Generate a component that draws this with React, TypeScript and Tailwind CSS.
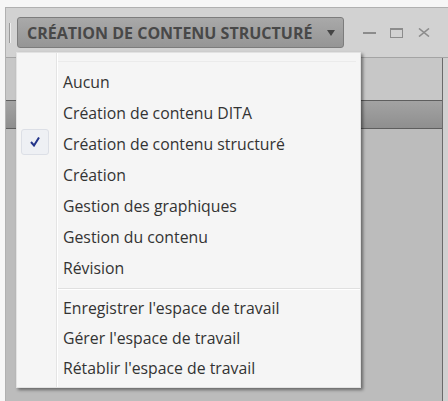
import React from "react";

const items1 = [
  "Aucun",
  "Création de contenu DITA",
  "Création de contenu structuré",
  "Création",
  "Gestion des graphiques",
  "Gestion du contenu",
  "Révision",
];
const items2 = [
  "Enregistrer l'espace de travail",
  "Gérer l'espace de travail",
  "Rétablir l'espace de travail",
];

export default function App() {
  return (
    <div
      className="relative w-[448px] h-[401px] overflow-hidden bg-[#f6f6f6]"
      style={{ fontFamily: '"Open Sans", "Noto Sans", sans-serif' }}
    >
      <div className="absolute left-[5px] top-[7px] right-0 bottom-0 flex flex-col border-l border-t border-[#b0b0b0] bg-[#d2d2d2]">
        {/* title bar */}
        <div className="relative h-[50px] flex items-center border-b border-[#a4a4a4] shrink-0">
          <div className="ml-[3px] w-[1px] h-[20px] bg-[#9a9a9a] border-r border-[#eeeeee] box-content" />
          <div className="ml-[6px] w-[327px] h-[31px] rounded-[3px] border border-[#7c7c7c] bg-gradient-to-b from-[#a9a9a9] to-[#959595] flex items-center pl-[9px] pr-[8px]">
            <span className="text-[16px] font-bold text-[#484848] whitespace-nowrap leading-none">
              CRÉATION DE CONTENU STRUCTURÉ
            </span>
            <svg className="ml-auto" width="8" height="6" viewBox="0 0 8 6">
              <path d="M0 0 L8 0 L4 6 Z" fill="#454545" />
            </svg>
          </div>
          {/* window controls */}
          <div className="ml-[19px] flex items-center">
            <div className="w-[13px] h-[2px] bg-[#8c8c8c]" />
            <div className="ml-[14px] w-[13px] h-[10px] border border-t-2 border-[#8c8c8c]" />
            <svg className="ml-[15px]" width="12" height="9" viewBox="0 0 12 9">
              <path d="M1 0.5 L11 8.5 M11 0.5 L1 8.5" stroke="#8c8c8c" strokeWidth="1.6" />
            </svg>
          </div>
        </div>
        {/* panel */}
        <div className="flex-1 flex">
          <div className="flex-1 flex flex-col border-r border-[#6a6a6a]">
            <div className="h-[42px] bg-[#c7c7c7]" />
            <div className="h-[29px] border-y border-[#5e5e5e] bg-gradient-to-b from-[#a3a3a3] to-[#8f8f8f]" />
            <div className="flex-1 bg-[#bcbcbc]" />
          </div>
          <div className="w-[5px] bg-[#d0d0d0]" />
        </div>
      </div>

      {/* dropdown menu */}
      <div className="absolute left-[16px] top-[52px] w-[345px] h-[336px] bg-[#f5f5f5] border border-[#e2e2e2] shadow-[2px_2px_3px_rgba(0,0,0,0.45)] flex">
        <div className="w-[40px] shrink-0 border-r border-[#e4e4e4]" />
        <div className="flex-1 border-l border-white relative">
          <div className="h-[9px] border-b border-[#ebebeb] mr-[4px]" />
          <div className="pt-[5px]">
            {items1.map((t) => (
              <div key={t} className="h-[31px] flex items-center pl-[5px] text-[15.8px] text-[#333333] whitespace-nowrap">
                {t}
              </div>
            ))}
            <div className="h-[10px] flex flex-col justify-center">
              <div className="h-[1px] bg-[#e0e0e0]" />
              <div className="h-[1px] bg-white" />
            </div>
            {items2.map((t) => (
              <div key={t} className="h-[30px] flex items-center pl-[5px] text-[15.8px] text-[#333333] whitespace-nowrap">
                {t}
              </div>
            ))}
          </div>
        </div>
        {/* check box */}
        <div className="absolute left-[4px] top-[76px] w-[28px] h-[26px] rounded-[3px] border border-[#dcdfe6] bg-[#eef0f4] flex items-center justify-center">
          <svg width="10" height="10" viewBox="0 0 10 10">
            <path d="M1 5 L4 8.5 L9 0.5" stroke="#23348a" strokeWidth="2" fill="none" />
          </svg>
        </div>
      </div>
    </div>
  );
}
